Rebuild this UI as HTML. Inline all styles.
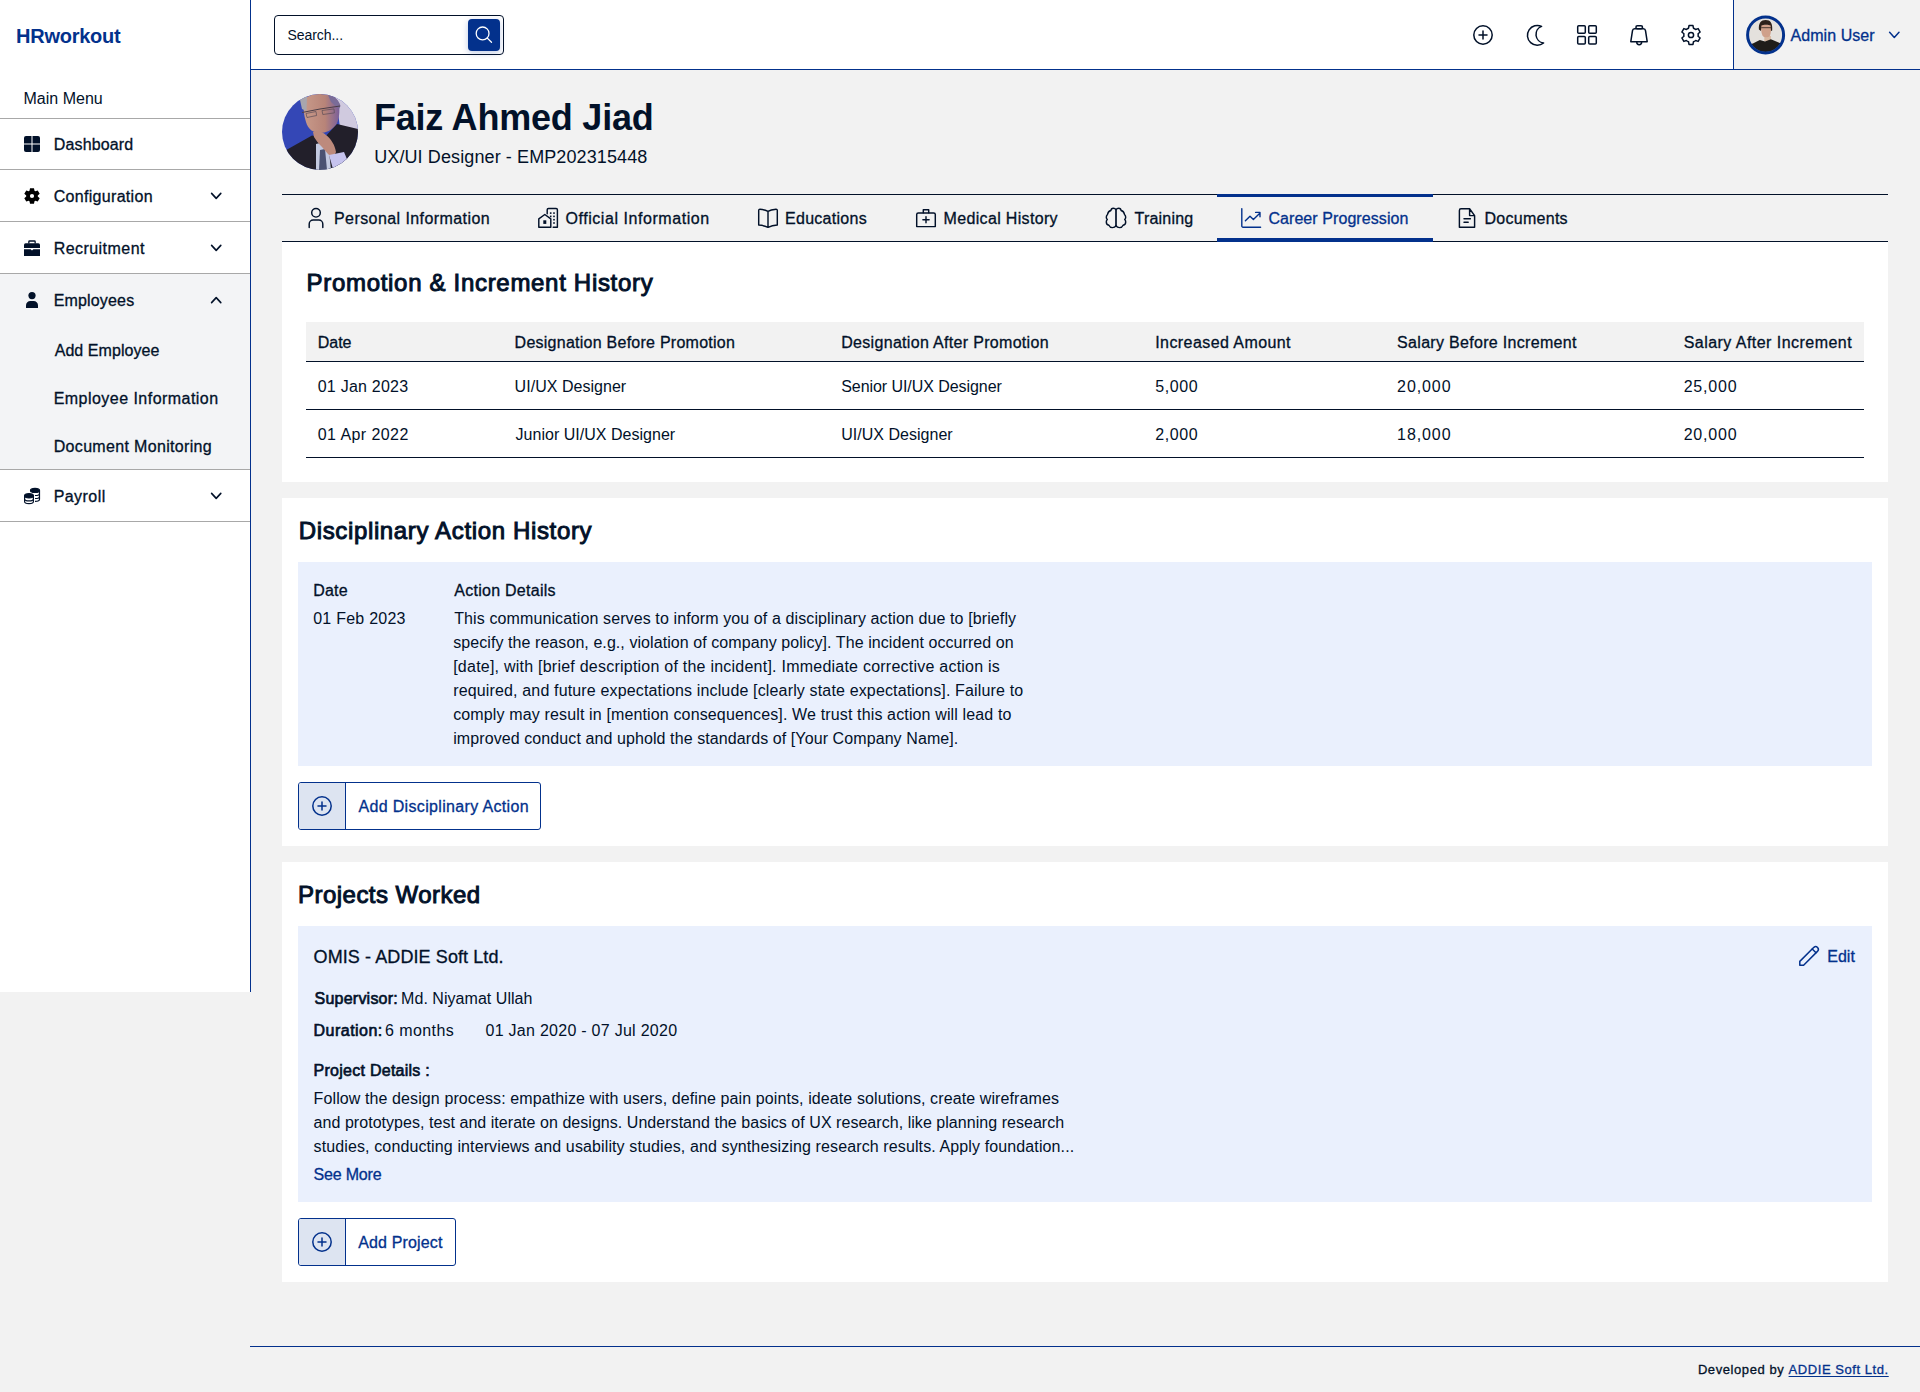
<!DOCTYPE html>
<html><head><meta charset="utf-8">
<style>
*{box-sizing:border-box;margin:0;padding:0}
html,body{width:1920px;height:1392px;overflow:hidden;background:#f2f2f2;font-family:"Liberation Sans",sans-serif}
.a{position:absolute}
.t{position:absolute;white-space:pre;line-height:1;font-family:"Liberation Sans",sans-serif}
.hl{position:absolute;height:1px}
svg{position:absolute;overflow:visible}
</style></head><body>
<!-- sidebar -->
<div class="a" style="left:0;top:0;width:251px;height:992px;background:#fff;border-right:1px solid #03318c"></div>
<div class="a" style="left:0;top:274px;width:250px;height:195px;background:#f3f4f6"></div>
<div class="hl" style="left:0;top:118px;width:250px;background:#a8a8a8"></div>
<div class="hl" style="left:0;top:169px;width:250px;background:#a8a8a8"></div>
<div class="hl" style="left:0;top:221px;width:250px;background:#a8a8a8"></div>
<div class="hl" style="left:0;top:273px;width:250px;background:#a8a8a8"></div>
<div class="hl" style="left:0;top:469px;width:250px;background:#a8a8a8"></div>
<div class="hl" style="left:0;top:521px;width:250px;background:#a8a8a8"></div>
<!-- header -->
<div class="a" style="left:251px;top:0;width:1482px;height:69px;background:#fff"></div>
<div class="a" style="left:1733px;top:0;width:1px;height:69px;background:#03318c"></div>
<div class="hl" style="left:251px;top:69px;width:1669px;background:#03318c"></div>
<div class="a" style="left:274px;top:15px;width:230px;height:40px;border:1.2px solid #021129;border-radius:4px;background:#fff"></div>
<div class="a" style="left:468px;top:19px;width:32px;height:32px;border-radius:4px;background:#03318c;box-shadow:0 2px 6px rgba(5,52,154,.25)"></div>
<!-- profile tabs -->
<div class="hl" style="left:282px;top:194px;width:1606px;background:#021129"></div>
<div class="hl" style="left:282px;top:241px;width:1606px;background:#021129"></div>
<div class="a" style="left:1217px;top:194px;width:216px;height:3px;background:#03318c"></div>
<div class="a" style="left:1217px;top:238px;width:216px;height:4px;background:#03318c"></div>
<!-- cards -->
<div class="a" style="left:282px;top:242px;width:1606px;height:240px;background:#fff"></div>
<div class="a" style="left:306px;top:322px;width:1558px;height:39px;background:#f2f2f2"></div>
<div class="hl" style="left:306px;top:361px;width:1558px;background:#021129"></div>
<div class="hl" style="left:306px;top:409px;width:1558px;background:#021129"></div>
<div class="hl" style="left:306px;top:457px;width:1558px;background:#021129"></div>

<div class="a" style="left:282px;top:498px;width:1606px;height:348px;background:#fff"></div>
<div class="a" style="left:298px;top:562px;width:1574px;height:204px;background:#eaf0fd"></div>
<div class="a" style="left:298px;top:782px;width:243px;height:48px;border:1px solid #03318c;border-radius:3px;background:#fff;overflow:hidden"><div class="a" style="left:0;top:0;width:47px;height:46px;background:#dde4f1;border-right:1px solid #03318c"></div></div>

<div class="a" style="left:282px;top:862px;width:1606px;height:420px;background:#fff"></div>
<div class="a" style="left:298px;top:926px;width:1574px;height:276px;background:#eaf0fd"></div>
<div class="a" style="left:298px;top:1218px;width:158px;height:48px;border:1px solid #03318c;border-radius:3px;background:#fff;overflow:hidden"><div class="a" style="left:0;top:0;width:47px;height:46px;background:#dde4f1;border-right:1px solid #03318c"></div></div>
<!-- footer -->
<div class="hl" style="left:250px;top:1346px;width:1670px;background:#03318c"></div>
<svg style="left:0;top:0" width="1920" height="1392" viewBox="0 0 1920 1392" fill="none" stroke-linecap="round" stroke-linejoin="round">
<g fill="#021129"><path d="M26 136h5.5v7.5H24V138a2 2 0 0 1 2-2z"/><path d="M32.5 136H38a2 2 0 0 1 2 2v5.5h-7.5z"/><path d="M24 144.5h7.5v7.5H26a2 2 0 0 1-2-2z"/><path d="M32.5 144.5H40v5.5a2 2 0 0 1-2 2h-5.5z"/></g>
<path fill="#000" fill-rule="evenodd" d="M29.49 190.77 L30.02 188.25 L33.98 188.25 L34.51 190.77 A5.80 5.80 0 0 1 35.27 191.21 L37.72 190.41 L39.70 193.84 L37.78 195.56 A5.80 5.80 0 0 1 37.78 196.44 L39.70 198.16 L37.72 201.59 L35.27 200.79 A5.80 5.80 0 0 1 34.51 201.23 L33.98 203.75 L30.02 203.75 L29.49 201.23 A5.80 5.80 0 0 1 28.73 200.79 L26.28 201.59 L24.30 198.16 L26.22 196.44 A5.80 5.80 0 0 1 26.22 195.56 L24.30 193.84 L26.28 190.41 L28.73 191.21 A5.80 5.80 0 0 1 29.49 190.77Z M34.1 196 A2.1 2.1 0 1 0 29.9 196 A2.1 2.1 0 1 0 34.1 196Z"/>
<g fill="#021129"><path d="M28.2 243.4V241.6a1.4 1.4 0 0 1 1.4-1.4h4.8a1.4 1.4 0 0 1 1.4 1.4v1.8h-1.3v-1.6h-5v1.6z"/><path d="M25.6 243.2h12.8a1.6 1.6 0 0 1 1.6 1.6v3.2H24v-3.2a1.6 1.6 0 0 1 1.6-1.6z"/><path d="M24 249.2h6.6l1.4 1.4 1.4-1.4H40V256H24z"/></g>
<g fill="#021129"><circle cx="32" cy="295.6" r="3.6"/><path d="M26 308v-2.6c0-2.6 2-4.4 4.4-4.4h3.2c2.4 0 4.4 1.8 4.4 4.4V308z"/></g>
<g fill="#021129" stroke="#021129" stroke-width="1.2"><ellipse cx="35" cy="490.4" rx="4.5" ry="2.0"/><path fill="none" d="M30.5 493.4c0 1.2 2 2.1 4.5 2.1s4.5-.9 4.5-2.1M30.5 496.4c0 1.2 2 2.1 4.5 2.1s4.5-.9 4.5-2.1M30.5 499.3c0 1.2 2 2.1 4.5 2.1s4.5-.9 4.5-2.1M39.5 490.4v8.9"/></g>
<path fill="#fff" d="M23 495.8c0-1.9 2.7-3.3 6-3.3s6 1.4 6 3.3v6c0 1.9-2.7 3.3-6 3.3s-6-1.4-6-3.3z"/>
<g fill="#021129" stroke="#021129" stroke-width="1.2"><ellipse cx="29" cy="495.8" rx="4.4" ry="2.1"/><path fill="none" d="M24.6 498.7c0 1.3 2 2.2 4.4 2.2s4.4-.9 4.4-2.2M24.6 501.5c0 1.3 2 2.2 4.4 2.2s4.4-.9 4.4-2.2M24.6 495.8v5.7M33.4 495.8v5.7"/></g>
<path stroke="#021129" stroke-width="1.6" d="M211.6 193.4 L216.2 198.4 L220.8 193.4"/>
<path stroke="#021129" stroke-width="1.6" d="M211.6 245.4 L216.2 250.4 L220.8 245.4"/>
<path stroke="#021129" stroke-width="1.6" d="M211.6 493.4 L216.2 498.4 L220.8 493.4"/>
<path stroke="#021129" stroke-width="1.6" d="M211.6 302.6 L216.2 297.6 L220.8 302.6"/>
<g stroke="#021129" stroke-width="1.5">
<circle cx="1483" cy="35" r="9.2"/><path d="M1479 35h8M1483 31v8"/>
<path d="M1541.6 26.4A9.9 9.9 0 1 0 1543.6 43A8.6 8.6 0 0 1 1541.6 26.4Z"/>
<rect x="1577.7" y="25.7" width="7.6" height="7.6" rx="1"/><rect x="1588.7" y="25.7" width="7.6" height="7.6" rx="1"/><rect x="1577.7" y="36.4" width="7.6" height="7.6" rx="1"/><rect x="1588.7" y="36.4" width="7.6" height="7.6" rx="1"/>
<rect x="1635.9" y="25.7" width="6.6" height="3" rx="1.5"/><path d="M1630.8 41.7l1.7-11a2.2 2.2 0 0 1 2.2-1.9h8.6a2.2 2.2 0 0 1 2.2 1.9l1.7 11z"/><path d="M1636.8 42.3a2.4 2.4 0 0 0 4.8 0"/>
<path d="M1688.55 28.23 L1689.01 25.61 L1692.99 25.61 L1693.45 28.23 A7.20 7.20 0 0 1 1695.64 29.49 L1698.14 28.58 L1700.13 32.02 L1698.09 33.74 A7.20 7.20 0 0 1 1698.09 36.26 L1700.13 37.98 L1698.14 41.42 L1695.64 40.51 A7.20 7.20 0 0 1 1693.45 41.77 L1692.99 44.39 L1689.01 44.39 L1688.55 41.77 A7.20 7.20 0 0 1 1686.36 40.51 L1683.86 41.42 L1681.87 37.98 L1683.91 36.26 A7.20 7.20 0 0 1 1683.91 33.74 L1681.87 32.02 L1683.86 28.58 L1686.36 29.49 A7.20 7.20 0 0 1 1688.55 28.23Z"/><circle cx="1691" cy="35" r="2.6"/>
</g>
<path stroke="#03318c" stroke-width="1.5" d="M1889.6 32.2 L1894.3 37.4 L1899 32.2"/>
<g stroke="#fff" stroke-width="1.3"><circle cx="482.6" cy="33.4" r="6.4"/><path d="M487.3 38.1l4.2 4.2"/></g>
<g stroke="#021129" stroke-width="1.45">
<circle cx="316" cy="212.8" r="4.3"/><path d="M309.2 227.6v-3.6a4 4 0 0 1 4-4h5.6a4 4 0 0 1 4 4v3.6"/>
<path d="M538.8 227.3v-8.4l6-4.4 6 4.4v8.4z"/><path d="M547.2 213.7v-4a1.3 1.3 0 0 1 1.3-1.3h7.6a1.3 1.3 0 0 1 1.3 1.3v17.6h-4.2"/>
</g>
<g fill="#021129"><rect x="543.3" y="220.3" width="3" height="3.6"/><rect x="549.9" y="212.3" width="1.6" height="1.6"/><rect x="553.2" y="212.3" width="1.6" height="1.6"/><rect x="549.9" y="215.6" width="1.6" height="1.6"/><rect x="553.2" y="215.6" width="1.6" height="1.6"/><rect x="553.2" y="218.9" width="1.6" height="1.6"/><rect x="553.2" y="222.2" width="1.6" height="1.6"/></g>
<g stroke="#021129" stroke-width="1.45">
<path d="M768 211.4c-1.8-1.2-5.2-2-8-2.2a1.2 1.2 0 0 0-1.3 1.2v14.6c3.2.2 6.6 1 9.3 2.3 2.7-1.3 6.1-2.1 9.3-2.3V210.4a1.2 1.2 0 0 0-1.3-1.2c-2.8.2-6.2 1-8 2.2zM768 211.4v15.9"/>
<path d="M916.7 226.6v-12a1.6 1.6 0 0 1 1.6-1.6h15.4a1.6 1.6 0 0 1 1.6 1.6v12z"/><path d="M923.3 212.8v-3.1h5.4v3.1"/><path d="M926 216.6v6.2M922.9 219.7h6.2"/>
<path d="M1116.00 209.60 C1115.40 208.70 1114.40 208.20 1113.30 208.20 C1111.90 208.20 1111.00 209.20 1110.90 210.50 C1109.00 211.00 1107.80 212.50 1107.50 214.50 C1106.70 215.20 1106.30 216.20 1106.30 217.30 C1106.30 218.20 1106.70 219.00 1107.30 219.60 C1106.70 220.20 1106.30 221.00 1106.30 221.90 C1106.30 223.60 1107.40 224.90 1108.90 225.30 C1109.50 226.70 1110.80 227.60 1112.40 227.60 C1114.00 227.60 1115.30 226.90 1116.00 225.70 M1116.00 209.60 C1116.60 208.70 1117.60 208.20 1118.70 208.20 C1120.10 208.20 1121.00 209.20 1121.10 210.50 C1123.00 211.00 1124.20 212.50 1124.50 214.50 C1125.30 215.20 1125.70 216.20 1125.70 217.30 C1125.70 218.20 1125.30 219.00 1124.70 219.60 C1125.30 220.20 1125.70 221.00 1125.70 221.90 C1125.70 223.60 1124.60 224.90 1123.10 225.30 C1122.50 226.70 1121.20 227.60 1119.60 227.60 C1118.00 227.60 1116.70 226.90 1116.00 225.70"/>
<path stroke-width="1.7" d="M1116 209.8V225.6"/>
<path d="M1469.6 208.8h-8.6a1.6 1.6 0 0 0-1.6 1.6v16.8h15.2v-11.6zM1469.6 208.8v6.8h5"/><path d="M1464 218.8h6.4M1464 222.3h4.2"/>
</g>
<path stroke="#03318c" stroke-width="1.4" d="M1241.8 208.6v17.4a1.2 1.2 0 0 0 1.2 1.2h17.6M1245.4 220.8l4.6-4.6 3.4 3.4 6.4-6.4M1255.6 212.4h4.4v4.4"/>
<g stroke="#03318c" stroke-width="1.5"><circle cx="322" cy="806" r="9.2"/><path d="M318 806h8M322 802v8"/></g>
<g stroke="#03318c" stroke-width="1.5"><circle cx="322" cy="1242" r="9.2"/><path d="M318 1242h8M322 1238v8"/></g>
<g stroke="#03318c" stroke-width="1.5"><path d="M1799.8 961.4 L1813.9 947.3 A2.7 2.7 0 0 1 1817.7 951.1 L1803.6 965.2 L1799.8 965.2 Z"/><path d="M1812.2 949 L1816 952.8"/></g>
</svg>
<svg style="left:282px;top:94px" width="76" height="76" viewBox="0 0 76 76">
<defs><clipPath id="cp1"><circle cx="38" cy="38" r="38"/></clipPath>
<linearGradient id="fg1" x1="0" y1="0" x2="1" y2="0"><stop offset="0" stop-color="#c89a8a"/><stop offset=".6" stop-color="#b88478"/><stop offset="1" stop-color="#7a5f9a"/></linearGradient></defs>
<g clip-path="url(#cp1)">
<rect width="76" height="76" fill="#3447b6"/>
<path d="M52 0H76V37L58 34L56 18Z" fill="#d0cadf"/>
<path d="M22 9C22 2 30 0 38 0C48 0 56 3 57 10C58 18 57 26 54 31C50 36 44 39 38 39C31 39 26 35 24 28C22 22 21 15 22 9Z" fill="url(#fg1)"/>
<path d="M18 6C20 3 23 2 25 3L24.5 17L20 15Z" fill="#a8a6ae"/>
<path d="M46 1C52 2 57 6 58.5 12L57 15L49 8Z" fill="#7a6c98"/>
<path d="M20 18.5L38 15L58 12" stroke="#4a3e48" stroke-width="1" fill="none"/>
<path d="M24 19.5l10-2 .6 4-9.6 2zM40 16.5l12-1.6.4 4-11.6 1.6z" stroke="#5a4c58" stroke-width=".7" fill="none"/>
<path d="M0 76V58L6 55L30 41.5L42 44L55 30L76 35V76Z" fill="#221f2a"/>
<path d="M34 50L46 47L49 76H34Z" fill="#c3c9e0"/>
<path d="M38 56L43 55L45 76H37Z" fill="#4b5272"/>
<path d="M31 38C35 36 41 38 44 41C49 45 53 51 54 58C53 62 49 63 46 60L40 53C36 49 34 46 32 43Z" fill="#bd8a7c"/>
<path d="M47 61L62 58L67 70L51 75Z" fill="#c6c3ee"/>
</g></svg>
<svg style="left:1746px;top:16px" width="39" height="39" viewBox="0 0 39 39">
<defs><clipPath id="cp2"><circle cx="19.6" cy="19" r="17"/></clipPath></defs>
<g clip-path="url(#cp2)">
<rect width="39" height="39" fill="#e4e1dd"/>
<path d="M18.3 20L18.3 25L24.9 25L24.9 20Z" fill="#d8b8a0"/>
<path d="M15 8.5C15 13 15.2 18 17 20.3C18.5 21.6 22 21.6 23.6 20.3C25 18 25.3 13 25 8.5Z" fill="#cfa08a"/>
<path d="M12.9 13.5C12.4 7 15 4 19.6 4C24.5 4 26.8 7 26.2 14.5L25 15L24.6 9.5C23 8.6 17 8.6 15.4 9.5L15 15Z" fill="#2c211b"/>
<path d="M15.2 11.7H25" stroke="#4a3a32" stroke-width="1"/>
<path d="M0 39V29L6.9 27.4L13.8 24L19 25.5L24.9 23.3L33.8 27.1L39 30V39Z" fill="#1f1d1a"/>
</g>
<circle cx="19.6" cy="19" r="18" fill="none" stroke="#03318c" stroke-width="3"/>
</svg>
<div class="t" id="t0" style="left:16.00px;top:26.00px;font-size:20px;font-weight:700;color:#03318c;letter-spacing:-0.250px;">HRworkout</div>
<div class="t" id="t1" style="left:23.40px;top:91.00px;font-size:16px;font-weight:400;color:#021129;letter-spacing:0.025px;">Main Menu</div>
<div class="t" id="t2" style="left:53.70px;top:137.00px;font-size:16px;font-weight:400;color:#021129;letter-spacing:0.162px;-webkit-text-stroke:0.3px #021129;">Dashboard</div>
<div class="t" id="t3" style="left:53.70px;top:189.00px;font-size:16px;font-weight:400;color:#021129;letter-spacing:0.308px;-webkit-text-stroke:0.3px #021129;">Configuration</div>
<div class="t" id="t4" style="left:53.70px;top:241.00px;font-size:16px;font-weight:400;color:#021129;letter-spacing:0.450px;-webkit-text-stroke:0.3px #021129;">Recruitment</div>
<div class="t" id="t5" style="left:53.70px;top:293.00px;font-size:16px;font-weight:400;color:#021129;letter-spacing:0.162px;-webkit-text-stroke:0.3px #021129;">Employees</div>
<div class="t" id="t6" style="left:54.70px;top:343.00px;font-size:16px;font-weight:400;color:#021129;letter-spacing:0.055px;-webkit-text-stroke:0.3px #021129;">Add Employee</div>
<div class="t" id="t7" style="left:53.70px;top:391.00px;font-size:16px;font-weight:400;color:#021129;letter-spacing:0.463px;-webkit-text-stroke:0.3px #021129;">Employee Information</div>
<div class="t" id="t8" style="left:53.70px;top:438.50px;font-size:16px;font-weight:400;color:#021129;letter-spacing:0.333px;-webkit-text-stroke:0.3px #021129;">Document Monitoring</div>
<div class="t" id="t9" style="left:53.70px;top:489.00px;font-size:16px;font-weight:400;color:#021129;letter-spacing:0.433px;-webkit-text-stroke:0.3px #021129;">Payroll</div>
<div class="t" id="t10" style="left:287.40px;top:28.00px;font-size:14px;font-weight:400;color:#021129;letter-spacing:-0.050px;">Search...</div>
<div class="t" id="t11" style="left:1790.50px;top:28.00px;font-size:16px;font-weight:400;color:#03318c;letter-spacing:0.056px;-webkit-text-stroke:0.3px #03318c;">Admin User</div>
<div class="t" id="t12" style="left:374.00px;top:100.00px;font-size:36px;font-weight:700;color:#021129;letter-spacing:-0.214px;">Faiz Ahmed Jiad</div>
<div class="t" id="t13" style="left:374.20px;top:147.60px;font-size:18px;font-weight:400;color:#021129;letter-spacing:0.107px;">UX/UI Designer - EMP202315448</div>
<div class="t" id="t14" style="left:334.00px;top:211.00px;font-size:16px;font-weight:400;color:#021129;letter-spacing:0.421px;-webkit-text-stroke:0.3px #021129;">Personal Information</div>
<div class="t" id="t15" style="left:565.50px;top:211.00px;font-size:16px;font-weight:400;color:#021129;letter-spacing:0.553px;-webkit-text-stroke:0.3px #021129;">Official Information</div>
<div class="t" id="t16" style="left:785.00px;top:211.00px;font-size:16px;font-weight:400;color:#021129;letter-spacing:0.278px;-webkit-text-stroke:0.3px #021129;">Educations</div>
<div class="t" id="t17" style="left:943.60px;top:211.00px;font-size:16px;font-weight:400;color:#021129;letter-spacing:0.329px;-webkit-text-stroke:0.3px #021129;">Medical History</div>
<div class="t" id="t18" style="left:1134.60px;top:211.00px;font-size:16px;font-weight:400;color:#021129;letter-spacing:0.200px;-webkit-text-stroke:0.3px #021129;">Training</div>
<div class="t" id="t19" style="left:1268.40px;top:211.00px;font-size:16px;font-weight:400;color:#03318c;letter-spacing:0.076px;-webkit-text-stroke:0.3px #03318c;">Career Progression</div>
<div class="t" id="t20" style="left:1484.40px;top:211.00px;font-size:16px;font-weight:400;color:#021129;letter-spacing:0.287px;-webkit-text-stroke:0.3px #021129;">Documents</div>
<div class="t" id="t21" style="left:306.60px;top:271.00px;font-size:24px;font-weight:400;color:#021129;letter-spacing:0.689px;-webkit-text-stroke:0.96px #021129;">Promotion &amp; Increment History</div>
<div class="t" id="t22" style="left:317.75px;top:334.70px;font-size:16px;font-weight:400;color:#021129;letter-spacing:-0.017px;-webkit-text-stroke:0.3px #021129;">Date</div>
<div class="t" id="t23" style="left:514.60px;top:334.70px;font-size:16px;font-weight:400;color:#021129;letter-spacing:0.252px;-webkit-text-stroke:0.3px #021129;">Designation Before Promotion</div>
<div class="t" id="t24" style="left:841.20px;top:334.70px;font-size:16px;font-weight:400;color:#021129;letter-spacing:0.315px;-webkit-text-stroke:0.3px #021129;">Designation After Promotion</div>
<div class="t" id="t25" style="left:1155.25px;top:334.70px;font-size:16px;font-weight:400;color:#021129;letter-spacing:0.423px;-webkit-text-stroke:0.3px #021129;">Increased Amount</div>
<div class="t" id="t26" style="left:1397.10px;top:334.70px;font-size:16px;font-weight:400;color:#021129;letter-spacing:0.309px;-webkit-text-stroke:0.3px #021129;">Salary Before Increment</div>
<div class="t" id="t27" style="left:1683.70px;top:334.70px;font-size:16px;font-weight:400;color:#021129;letter-spacing:0.457px;-webkit-text-stroke:0.3px #021129;">Salary After Increment</div>
<div class="t" id="t28" style="left:317.75px;top:379.00px;font-size:16px;font-weight:400;color:#021129;letter-spacing:0.225px;">01 Jan 2023</div>
<div class="t" id="t29" style="left:514.60px;top:379.00px;font-size:16px;font-weight:400;color:#021129;letter-spacing:0.031px;">UI/UX Designer</div>
<div class="t" id="t30" style="left:841.20px;top:379.00px;font-size:16px;font-weight:400;color:#021129;letter-spacing:-0.060px;">Senior UI/UX Designer</div>
<div class="t" id="t31" style="left:1155.25px;top:379.00px;font-size:16px;font-weight:400;color:#021129;letter-spacing:0.562px;">5,000</div>
<div class="t" id="t32" style="left:1397.10px;top:379.00px;font-size:16px;font-weight:400;color:#021129;letter-spacing:0.900px;">20,000</div>
<div class="t" id="t33" style="left:1683.70px;top:379.00px;font-size:16px;font-weight:400;color:#021129;letter-spacing:0.780px;">25,000</div>
<div class="t" id="t34" style="left:317.75px;top:427.00px;font-size:16px;font-weight:400;color:#021129;letter-spacing:0.425px;">01 Apr 2022</div>
<div class="t" id="t35" style="left:515.60px;top:427.00px;font-size:16px;font-weight:400;color:#021129;letter-spacing:0.020px;">Junior UI/UX Designer</div>
<div class="t" id="t36" style="left:841.20px;top:427.00px;font-size:16px;font-weight:400;color:#021129;letter-spacing:0.023px;">UI/UX Designer</div>
<div class="t" id="t37" style="left:1155.25px;top:427.00px;font-size:16px;font-weight:400;color:#021129;letter-spacing:0.562px;">2,000</div>
<div class="t" id="t38" style="left:1397.10px;top:427.00px;font-size:16px;font-weight:400;color:#021129;letter-spacing:0.900px;">18,000</div>
<div class="t" id="t39" style="left:1683.70px;top:427.00px;font-size:16px;font-weight:400;color:#021129;letter-spacing:0.780px;">20,000</div>
<div class="t" id="t40" style="left:298.70px;top:519.00px;font-size:24px;font-weight:400;color:#021129;letter-spacing:0.646px;-webkit-text-stroke:0.96px #021129;">Disciplinary Action History</div>
<div class="t" id="t41" style="left:313.20px;top:583.00px;font-size:16px;font-weight:400;color:#021129;letter-spacing:0.233px;-webkit-text-stroke:0.3px #021129;">Date</div>
<div class="t" id="t42" style="left:454.20px;top:583.00px;font-size:16px;font-weight:400;color:#021129;letter-spacing:0.277px;-webkit-text-stroke:0.3px #021129;">Action Details</div>
<div class="t" id="t43" style="left:313.20px;top:611.00px;font-size:16px;font-weight:400;color:#021129;letter-spacing:0.240px;">01 Feb 2023</div>
<div class="t" id="t44" style="left:454.20px;top:611.00px;font-size:16px;font-weight:400;color:#021129;letter-spacing:0.111px;">This communication serves to inform you of a disciplinary action due to [briefly</div>
<div class="t" id="t45" style="left:453.20px;top:635.00px;font-size:16px;font-weight:400;color:#021129;letter-spacing:0.073px;">specify the reason, e.g., violation of company policy]. The incident occurred on</div>
<div class="t" id="t46" style="left:453.20px;top:659.00px;font-size:16px;font-weight:400;color:#021129;letter-spacing:0.233px;">[date], with [brief description of the incident]. Immediate corrective action is</div>
<div class="t" id="t47" style="left:453.20px;top:683.00px;font-size:16px;font-weight:400;color:#021129;letter-spacing:0.152px;">required, and future expectations include [clearly state expectations]. Failure to</div>
<div class="t" id="t48" style="left:453.20px;top:707.00px;font-size:16px;font-weight:400;color:#021129;letter-spacing:0.140px;">comply may result in [mention consequences]. We trust this action will lead to</div>
<div class="t" id="t49" style="left:453.20px;top:731.00px;font-size:16px;font-weight:400;color:#021129;letter-spacing:0.091px;">improved conduct and uphold the standards of [Your Company Name].</div>
<div class="t" id="t50" style="left:358.40px;top:799.00px;font-size:16px;font-weight:400;color:#03318c;letter-spacing:0.341px;-webkit-text-stroke:0.3px #03318c;">Add Disciplinary Action</div>
<div class="t" id="t51" style="left:298.00px;top:883.00px;font-size:24px;font-weight:400;color:#021129;letter-spacing:0.471px;-webkit-text-stroke:0.96px #021129;">Projects Worked</div>
<div class="t" id="t52" style="left:313.60px;top:948.00px;font-size:18px;font-weight:400;color:#021129;letter-spacing:0.090px;-webkit-text-stroke:0.3px #021129;">OMIS - ADDIE Soft Ltd.</div>
<div class="t" id="t53" style="left:1827.20px;top:949.00px;font-size:16px;font-weight:400;color:#03318c;letter-spacing:0.033px;-webkit-text-stroke:0.3px #03318c;">Edit</div>
<div class="t" id="t54" style="left:314.60px;top:990.50px;font-size:16px;font-weight:400;color:#021129;letter-spacing:0.220px;-webkit-text-stroke:0.64px #021129;">Supervisor:</div>
<div class="t" id="t55" style="left:401.10px;top:990.50px;font-size:16px;font-weight:400;color:#021129;letter-spacing:0.038px;">Md. Niyamat Ullah</div>
<div class="t" id="t56" style="left:313.60px;top:1022.50px;font-size:16px;font-weight:400;color:#021129;letter-spacing:0.475px;-webkit-text-stroke:0.64px #021129;">Duration:</div>
<div class="t" id="t57" style="left:385.00px;top:1022.50px;font-size:16px;font-weight:400;color:#021129;letter-spacing:0.429px;">6 months</div>
<div class="t" id="t58" style="left:485.50px;top:1022.50px;font-size:16px;font-weight:400;color:#021129;letter-spacing:0.271px;">01 Jan 2020 - 07 Jul 2020</div>
<div class="t" id="t59" style="left:313.60px;top:1063.00px;font-size:16px;font-weight:400;color:#021129;letter-spacing:0.259px;-webkit-text-stroke:0.64px #021129;">Project Details :</div>
<div class="t" id="t60" style="left:313.60px;top:1091.00px;font-size:16px;font-weight:400;color:#021129;letter-spacing:0.104px;">Follow the design process: empathize with users, define pain points, ideate solutions, create wireframes</div>
<div class="t" id="t61" style="left:313.60px;top:1115.00px;font-size:16px;font-weight:400;color:#021129;letter-spacing:0.042px;">and prototypes, test and iterate on designs. Understand the basics of UX research, like planning research</div>
<div class="t" id="t62" style="left:313.60px;top:1139.00px;font-size:16px;font-weight:400;color:#021129;letter-spacing:0.118px;">studies, conducting interviews and usability studies, and synthesizing research results. Apply foundation...</div>
<div class="t" id="t63" style="left:313.60px;top:1167.00px;font-size:16px;font-weight:400;color:#03318c;letter-spacing:-0.193px;-webkit-text-stroke:0.3px #03318c;">See More</div>
<div class="t" id="t64" style="left:358.20px;top:1235.00px;font-size:16px;font-weight:400;color:#03318c;letter-spacing:0.150px;-webkit-text-stroke:0.3px #03318c;">Add Project</div>
<div class="t" id="t65" style="left:1697.90px;top:1362.60px;font-size:13px;font-weight:400;color:#021129;letter-spacing:0.582px;-webkit-text-stroke:0.3px #021129;">Developed by</div>
<div class="t" id="t66" style="left:1788.60px;top:1362.60px;font-size:13px;font-weight:400;color:#03318c;letter-spacing:0.557px;-webkit-text-stroke:0.3px #03318c;text-decoration:underline;text-underline-offset:2px;">ADDIE Soft Ltd.</div>
</body></html>
